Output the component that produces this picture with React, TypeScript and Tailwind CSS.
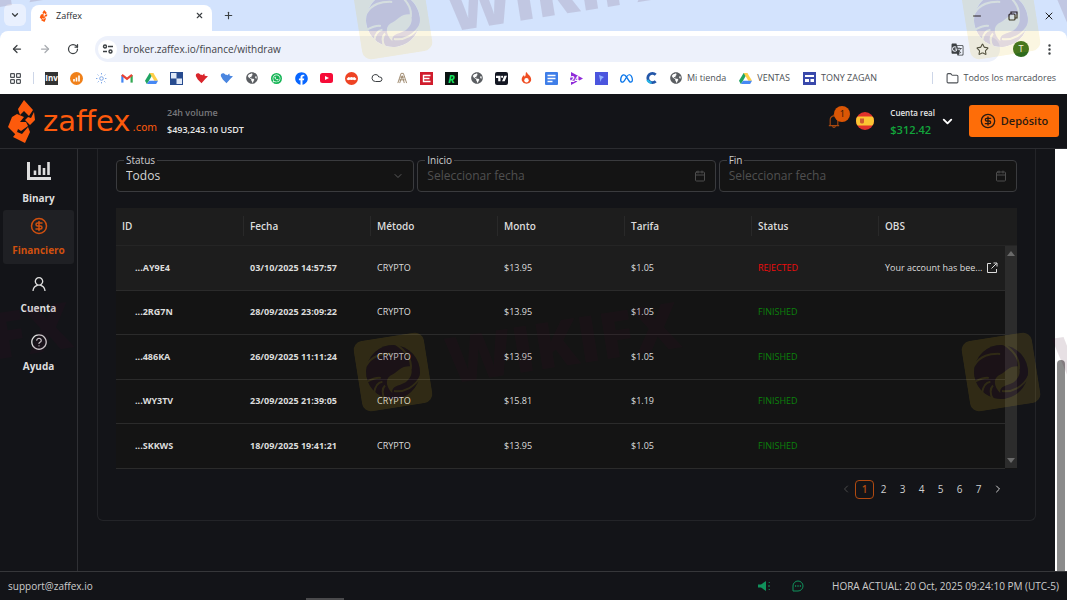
import type { ReactNode } from "react";
import {
  ArrowLeft,
  ArrowRight,
  Calendar,
  ChevronDown,
  ChevronLeft,
  ChevronRight,
  CircleDollarSign,
  Cloud,
  Folder,
  LayoutGrid,
  Minus,
  Plus,
  RotateCw,
  Star,
  X,
} from "lucide-react";
import { FaFacebook, FaGlobeAmericas, FaWhatsapp } from "react-icons/fa";
import { SiMeta, SiTradingview } from "react-icons/si";
import {
  AiOutlineBell,
  AiOutlineQuestionCircle,
  AiOutlineUser,
} from "react-icons/ai";
import { BsThreeDotsVertical } from "react-icons/bs";
import { MdGTranslate } from "react-icons/md";

function ZaffexMark({ className }: { className: string }) {
  return (
    <svg viewBox="0 0 27 43" className={className} fill="#fd5a0c" aria-hidden="true">
      <path d="M16 0 L25 10 L21 16 L16 11 L12 15 L10 9 Z" />
      <path d="M26 12 L27 20 L22 25 L17 20 L20 17 L23 18 Z" />
      <path d="M9 14 L16 17 L12 22 L18 22 L20 26 L13 31 L10 29 L8 35 L0 27 L4 17 Z" />
      <path d="M20 27 L22 32 L17 43 L5 37 L9 32 L14 34 Z" />
    </svg>
  );
}

function DriveIcon() {
  return (
    <svg viewBox="0 0 14 14" className="size-[13px]" aria-hidden="true">
      <path d="M5 1h4l-5 9-2 3-2-3.500z" fill="#1fa463" />
      <path d="M5 1h4l5 8.500h-4z" fill="#ffcf48" />
      <path d="M4.500 9.500H14L12 13H2z" fill="#4688f4" />
    </svg>
  );
}

function Tile({ className, children }: { className: string; children?: ReactNode }) {
  return (
    <span className={`flex items-center justify-center text-[8px] leading-none font-bold text-white ${className}`}>
      {children}
    </span>
  );
}

function HeartIcon({ fill }: { fill: string }) {
  return (
    <svg viewBox="0 0 14 14" className="size-[13px]" aria-hidden="true">
      <path d="M1 4.500 C0 1 4.500 0 6 3 C7 2.500 8 3.500 8 3.500 L10 1.500 L10.500 4 L14 4.500 L11.500 7 L7 12 L3 8 Z" fill={fill} />
    </svg>
  );
}

function Globe() {
  return <FaGlobeAmericas className="size-[12px] text-[#5b5e62]" />;
}

const bookmarks: { name: string; icon: ReactNode }[] = [
  { name: "Inv", icon: <Tile className="size-[13px] bg-[#333]">Inv</Tile> },
  {
    name: "Analytics",
    icon: (
      <svg viewBox="0 0 13 13" className="size-[13px]">
        <circle cx="6.500" cy="6.500" r="6.500" fill="#f08019" />
        <path d="M4 9.500V7M6.500 9.500V5.500M9 9.500V3.500" stroke="#fff" strokeWidth="1.600" />
      </svg>
    ),
  },
  {
    name: "Spark",
    icon: (
      <svg viewBox="0 0 13 13" className="size-[13px]" fill="none" stroke="#7fa8e8">
        <circle cx="6.500" cy="6.500" r="1.800" />
        <path d="M6.500 1v2M6.500 10v2M1 6.500h2M10 6.500h2M2.600 2.600l1.400 1.400M9 9l1.400 1.400M10.400 2.600L9 4M4 9l-1.400 1.400" strokeDasharray="1 .6" />
      </svg>
    ),
  },
  {
    name: "Gmail",
    icon: (
      <svg viewBox="0 0 13 10" className="h-[10px] w-[12px]" fill="none" strokeWidth="2.400">
        <path d="M1.500 10V2" stroke="#4285f4" />
        <path d="M11.500 10V2" stroke="#34a853" />
        <path d="M1 1.500l5.500 4.500L12 1.500" stroke="#ea4335" />
      </svg>
    ),
  },
  { name: "Drive", icon: <DriveIcon /> },
  {
    name: "Delicious",
    icon: (
      <svg viewBox="0 0 13 13" className="size-[13px]">
        <path d="M0 0h13v13H0z" fill="#274b8f" />
        <path d="M1 1h5.500v5.500H1zM6.500 6.500H12V12H6.500z" fill="#dfe8f7" />
      </svg>
    ),
  },
  { name: "Favoritos", icon: <HeartIcon fill="#d9252b" /> },
  { name: "Salud", icon: <HeartIcon fill="#4a86e0" /> },
  { name: "Web", icon: <Globe /> },
  { name: "WhatsApp", icon: <Tile className="size-[11px] rounded-full bg-[#16b556]"><FaWhatsapp className="size-[9px]" /></Tile> },
  { name: "Facebook", icon: <FaFacebook className="size-[13px] text-[#0866ff]" /> },
  {
    name: "YouTube",
    icon: (
      <svg viewBox="0 0 13 10" className="h-[10px] w-[13px]">
        <rect width="13" height="10" rx="2.500" fill="#f60b37" />
        <path d="M5 3l4 2-4 2z" fill="#fff" />
      </svg>
    ),
  },
  {
    name: "Incógnito",
    icon: (
      <svg viewBox="0 0 13 13" className="size-[13px]">
        <circle cx="6.500" cy="6.500" r="6.500" fill="#ee4324" />
        <path d="M1.500 7l2-2 1.500.600 1.500-.600 1.500.600 1.500-.600 2 2-1.500 1.300-2-.600-1.500.400-1.500-.400-2 .600z" fill="#fff" />
      </svg>
    ),
  },
  { name: "Nube", icon: <Cloud className="size-[12px] text-[#3c4043]" /> },
  {
    name: "Torre",
    icon: (
      <svg viewBox="0 0 13 13" className="size-[12px]" fill="none" stroke="#9a8468">
        <path d="M2 12L5.500 1.500H8L11.500 12M4 12L6.700 4 9 12M3.500 8.500h6M4.500 5.500h4.500" />
      </svg>
    ),
  },
  {
    name: "Express",
    icon: (
      <svg viewBox="0 0 13 13" className="size-[13px]">
        <path d="M0 0h13v13H0z" fill="#d01c2c" />
        <path d="M10.500 3.500h-7v6h7M3.500 6.500h6" stroke="#fff" strokeWidth="1.400" fill="none" />
      </svg>
    ),
  },
  { name: "R", icon: <Tile className="size-[13px] bg-[#0a1310]"><i className="text-[11px] text-[#18e060]">R</i></Tile> },
  { name: "Web 2", icon: <Globe /> },
  { name: "TradingView", icon: <Tile className="size-[13px] rounded-[2px] bg-[#131722]"><SiTradingview className="size-[11px]" /></Tile> },
  {
    name: "Hotmart",
    icon: (
      <svg viewBox="0 0 13 13" className="size-[13px]">
        <path d="M6 0c2 1 1 2 3 3 2 2 2.500 4 2 6a5 5 0 0 1-9 0C1 6 3 4 4 3c.500 1 0 1.500 1 1.500C6 3 5.500 1.500 6 0z" fill="#ef4e23" />
        <circle cx="6.500" cy="8.300" r="2.200" fill="#fff" />
      </svg>
    ),
  },
  {
    name: "Docs",
    icon: (
      <svg viewBox="0 0 13 13" className="size-[13px]">
        <rect width="13" height="13" rx="1" fill="#3f7ee8" />
        <path d="M2.500 3.500h8M2.500 6.500h8M2.500 9.500h5" stroke="#fff" strokeWidth="1.400" />
      </svg>
    ),
  },
  {
    name: "24",
    icon: (
      <svg viewBox="0 0 14 13" className="h-[13px] w-[14px]">
        <path d="M1 0l12 6.500L1 13V9l-1-2 1-3z" fill="#8e2bd9" />
        <text x="0" y="9.500" fontSize="8" fontWeight="700" fill="#fff" fontFamily="Open Sans, sans-serif">24</text>
      </svg>
    ),
  },
  {
    name: "Panel",
    icon: (
      <svg viewBox="0 0 13 13" className="size-[13px]">
        <path d="M0 0h13v13H0z" fill="#4b55de" />
        <path d="M4 3l5 2-2.500 2L5.500 10z" fill="#8fb0ff" />
      </svg>
    ),
  },
  { name: "Meta", icon: <SiMeta className="size-[13px] text-[#0a76ea]" /> },
  {
    name: "C",
    icon: (
      <svg viewBox="0 0 13 13" className="size-[12px]" fill="none">
        <path d="M10.500 3A5 5 0 1 0 10.500 10" stroke="#2356a8" strokeWidth="3" />
        <path d="M1.500 8.500A5 5 0 0 0 6 11.500" stroke="#27b3e6" strokeWidth="2.500" />
      </svg>
    ),
  },
];

const columns = ["ID", "Fecha", "Método", "Monto", "Tarifa", "Status", "OBS"];

const rows = [
  { id: "...AY9E4", date: "03/10/2025 14:57:57", amount: "$13.95", fee: "$1.05", status: "REJECTED", obs: "Your account has bee..." },
  { id: "...2RG7N", date: "28/09/2025 23:09:22", amount: "$13.95", fee: "$1.05", status: "FINISHED", obs: "" },
  { id: "...486KA", date: "26/09/2025 11:11:24", amount: "$13.95", fee: "$1.05", status: "FINISHED", obs: "" },
  { id: "...WY3TV", date: "23/09/2025 21:39:05", amount: "$15.81", fee: "$1.19", status: "FINISHED", obs: "" },
  { id: "...SKKWS", date: "18/09/2025 19:41:21", amount: "$13.95", fee: "$1.05", status: "FINISHED", obs: "" },
];

function BrowserChrome() {
  return (
    <div className="shrink-0 bg-[#d3e3fd] text-[#3c4043]">
      <div className="flex h-[31px] items-end pl-1">
        <button aria-label="Buscar pestañas" className="mb-[5px] flex size-[22px] items-center justify-center rounded-md bg-[#e9f0fe]">
          <ChevronDown className="size-[10px]" strokeWidth={3} />
        </button>
        <div className="ml-[5px] flex h-[26px] w-[181px] items-center rounded-t-lg bg-white pr-2 pb-[5px] pl-2">
          <ZaffexMark className="h-[12px] w-[9px]" />
          <span className="ml-2 text-[9px] text-[#2a2c30]">Zaffex</span>
          <button aria-label="Cerrar pestaña" className="ml-auto">
            <X className="size-[9px]" strokeWidth={3} />
          </button>
        </div>
        <button aria-label="Nueva pestaña" className="mb-[10px] ml-[11px]">
          <Plus className="size-[11px]" strokeWidth={2.500} />
        </button>
        <div className="mr-[12px] mb-[9px] ml-auto flex gap-6 text-[#222]">
          <button aria-label="Minimizar"><Minus className="size-[12px]" /></button>
          <button aria-label="Restaurar">
            <svg viewBox="0 0 12 12" className="size-[12px]" fill="none" stroke="currentColor" strokeWidth="1.200">
              <rect x="2" y="4" width="6" height="6" rx="1" />
              <path d="M4 4V2h6v6H8" />
            </svg>
          </button>
          <button aria-label="Cerrar"><X className="size-[12px]" strokeWidth={2} /></button>
        </div>
      </div>

      <div className="flex h-[36px] items-center rounded-t-lg bg-white pr-[11px] pl-[11px]">
        <button aria-label="Atrás"><ArrowLeft className="size-[12px]" strokeWidth={2.500} /></button>
        <button aria-label="Adelante" className="ml-4 text-[#a9acb1]"><ArrowRight className="size-[12px]" strokeWidth={2.500} /></button>
        <button aria-label="Recargar" className="ml-4"><RotateCw className="size-[12px]" strokeWidth={2.500} /></button>
        <div className="ml-4 flex h-[26px] flex-1 items-center rounded-full bg-[#edf1fb] pr-[11px] pl-[3px]">
          <button aria-label="Información del sitio" className="flex size-[19px] items-center justify-center rounded-full bg-white">
            <svg viewBox="0 0 12 12" className="size-[12px]" fill="none" stroke="currentColor" strokeWidth="1.400">
              <circle cx="3" cy="3.500" r="1.500" />
              <path d="M6 3.500h5M1 8.500h4" />
              <circle cx="8.500" cy="8.500" r="1.500" />
            </svg>
          </button>
          <input aria-label="Dirección" defaultValue="broker.zaffex.io/finance/withdraw" className="ml-[6px] min-w-0 flex-1 bg-transparent text-[10px] text-[#3f4247] outline-none" />
          <button aria-label="Traducir"><MdGTranslate className="size-[13px]" /></button>
          <button aria-label="Añadir a marcadores" className="ml-3"><Star className="size-[13px]" strokeWidth={2} /></button>
        </div>
        <button aria-label="Perfil" className="ml-[13px] flex size-4 items-center justify-center rounded-full bg-[#2f6b1d] text-[9px] text-white">T</button>
        <button aria-label="Menú" className="ml-[14px]"><BsThreeDotsVertical className="size-[13px]" /></button>
      </div>

      <nav aria-label="Marcadores" className="flex h-[27px] items-center bg-white pr-[11px] pb-[5px] text-[9px] text-[#4d5156]">
        <button aria-label="Aplicaciones" className="flex w-[31px] justify-center"><LayoutGrid className="size-[13px]" strokeWidth={2.200} /></button>
        <span className="mr-[5px] ml-[2px] h-3 w-px bg-[#cdd6e8]" />
        {bookmarks.map((b) => (
          <a key={b.name} href="#" aria-label={b.name} className="flex w-[25px] shrink-0 justify-center">{b.icon}</a>
        ))}
        <a href="#" className="ml-[6px] flex items-center gap-[5px] whitespace-nowrap"><Globe />Mi tienda</a>
        <a href="#" className="ml-[13px] flex items-center gap-[5px]"><DriveIcon />VENTAS</a>
        <a href="#" className="ml-[13px] flex items-center gap-[5px] whitespace-nowrap">
          <svg viewBox="0 0 13 13" className="size-[13px]" aria-hidden="true">
            <path d="M0 0h13v13H0z" fill="#3949ab" />
            <path d="M2 3h9v2H2zM2 7h4v3H2zM7.500 7H11v3H7.500z" fill="#fff" />
          </svg>
          TONY ZAGAN
        </a>
        <a href="#" className="ml-auto flex items-center gap-[5px] whitespace-nowrap">
          <span className="mr-2 h-3 w-px bg-[#cdd6e8]" />
          <Folder className="size-[13px]" />
          Todos los marcadores
        </a>
      </nav>
    </div>
  );
}

function AppHeader() {
  return (
    <header className="flex h-[55px] shrink-0 items-center border-b border-[#2b2c30] pr-2 pl-2">
      <a href="#" className="flex items-center text-[#fd5a0c]">
        <ZaffexMark className="h-[43px] w-[27px]" />
        <span className="ml-2 flex items-baseline gap-[2px] font-['DejaVu_Sans',sans-serif] leading-none">
          <span className="text-[29px]">zaffex</span>
          <span className="text-[10px]">.com</span>
        </span>
      </a>
      <div className="ml-[10px] text-[9px] leading-[17px] font-semibold">
        <div className="text-[#77787b]">24h volume</div>
        <div className="text-[#e6e6e6]">$493,243.10 USDT</div>
      </div>
      <button aria-label="Notificaciones" className="relative ml-auto text-[#a8480f]">
        <AiOutlineBell className="size-4" />
        <span className="absolute -top-[7px] -right-[8px] flex size-4 items-center justify-center rounded-full bg-[#db5605] text-[9px] text-[#2a1408]">1</span>
      </button>
      <button aria-label="Idioma" className="ml-[14px]">
        <svg viewBox="0 0 18 18" className="size-[18px] rounded-full">
          <path d="M0 0h18v18H0z" fill="#e0322c" />
          <path d="M0 4.500h18v9H0z" fill="#fbc533" />
          <path d="M4 6.500h4v3.500c0 2-4 2-4 0z" fill="#cf5a30" />
        </svg>
      </button>
      <div className="ml-4 leading-[17px]">
        <div className="text-[8px] leading-[17px] font-semibold text-[#e6e6e6]">Cuenta real</div>
        <div className="text-[11px] leading-[17px] font-semibold text-[#12a43b]">$312.42</div>
      </div>
      <button aria-label="Cambiar cuenta" className="ml-[5px] text-white"><ChevronDown className="size-[15px]" strokeWidth={3} /></button>
      <button className="ml-[14px] flex h-8 w-[90px] items-center justify-center gap-[5px] rounded-[3px] bg-[#fe6d08] text-[11px] font-semibold text-[#2a1a10]">
        <CircleDollarSign className="size-4" />
        Depósito
      </button>
    </header>
  );
}

function Sidebar() {
  return (
    <nav className="flex w-[78px] shrink-0 flex-col gap-1 border-r border-[#2f3034] px-[3px] pt-[9px] text-[10px] leading-4 font-bold text-[#dedede]">
      <a href="#" className="flex h-[48px] flex-col items-center justify-between">
        <svg viewBox="0 0 24 20" className="mt-[3px] h-5 w-6" fill="none" stroke="currentColor" aria-hidden="true">
          <path d="M1.500 1v16.500H24" strokeWidth="3" />
          <path d="M8 14V9.500M12.500 14V4M17 14V7M21.500 14V1" strokeWidth="2.600" />
        </svg>
        Binary
      </a>
      <a href="#" aria-current="page" className="flex h-[54px] flex-col items-center justify-between rounded-[3px] bg-[#1f2024] pt-[7px] pb-[6px] text-[#d0500f]">
        <CircleDollarSign className="size-[18px]" />
        Financiero
      </a>
      <a href="#" className="flex h-[54px] flex-col items-center justify-between pt-[7px] pb-[6px]">
        <AiOutlineUser className="size-[18px]" />
        Cuenta
      </a>
      <a href="#" className="flex h-[54px] flex-col items-center justify-between pt-[7px] pb-[6px]">
        <AiOutlineQuestionCircle className="size-[18px]" />
        Ayuda
      </a>
    </nav>
  );
}

function Field({ id, label, children }: { id: string; label: string; children: ReactNode }) {
  return (
    <div className="relative flex h-8 flex-1 items-center rounded-[4px] border border-[#3a3b3e] bg-[#141414] px-[9px] text-[12px] text-[#d6d6d6]">
      <label htmlFor={id} className="absolute -top-2 left-[7px] bg-[#141417] px-[2px] text-[10px] leading-[14px] text-[#cfcfcf]">
        {label}
      </label>
      {children}
    </div>
  );
}

function DateField({ id, label }: { id: string; label: string }) {
  return (
    <Field id={id} label={label}>
      <input id={id} placeholder="Seleccionar fecha" className="min-w-0 flex-1 bg-transparent outline-none placeholder:text-[#505050]" />
      <Calendar className="size-[12px] text-[#4d4d4d]" />
    </Field>
  );
}

function WithdrawTable() {
  return (
    <table className="mt-4 w-full table-fixed border-collapse bg-[#141414] text-left text-[9px] text-[#dcdcdc]">
      <colgroup>
        {columns.map((c) => (
          <col key={c} />
        ))}
        <col className="w-3" />
      </colgroup>
      <thead>
        <tr className="h-[37px] bg-[#1d1d1d] text-[10px]">
          {columns.map((c, i) => (
            <th key={c} scope="col" colSpan={c === "OBS" ? 2 : 1} className="border-b border-[#252525] p-0 font-semibold">
              <div className={`flex h-5 items-center pl-[6px] ${i === 0 ? "" : "border-l border-[#292929]"}`}>{c}</div>
            </th>
          ))}
        </tr>
      </thead>
      <tbody>
        {rows.map((r, i) => (
          <tr key={r.id} className="h-[44px] odd:h-[45px]">
            {[
              <span key="id" className="pl-3 font-bold">{r.id}</span>,
              <span key="date" className="font-bold">{r.date}</span>,
              "CRYPTO",
              r.amount,
              r.fee,
              <span key="status" className={r.status === "REJECTED" ? "text-[#f00c0c]" : "text-[#0b800b]"}>{r.status}</span>,
              r.obs && (
                <span key="obs" className="flex items-center gap-1">
                  {r.obs}
                  <button aria-label="Ver observación">
                    <svg viewBox="0 0 12 12" className="size-[12px]" fill="none" stroke="currentColor">
                      <path d="M5 1.500H1.500v9h9V7M5.500 6.500l5-5M7.500 1H11v3.500" />
                    </svg>
                  </button>
                </span>
              ),
            ].map((cell, c) => (
              <td key={columns[c]} className={`border-b border-[#2b2b2b] py-0 pr-0 pl-[7px] whitespace-nowrap ${i === 0 ? "bg-[#1d1d1d]" : ""}`}>
                {cell}
              </td>
            ))}
            {i === 0 && (
              <td rowSpan={rows.length} aria-hidden="true" className="relative bg-[#2c2c2c] p-0">
                <div className="absolute inset-0 flex flex-col items-center justify-between py-[5px]">
                  <svg viewBox="0 0 8 5" className="h-[5px] w-2" fill="#6a6a6a"><path d="M4 0l4 5H0z" /></svg>
                  <svg viewBox="0 0 8 5" className="h-[5px] w-2" fill="#6a6a6a"><path d="M4 5L0 0h8z" /></svg>
                </div>
              </td>
            )}
          </tr>
        ))}
      </tbody>
    </table>
  );
}

function Pagination() {
  return (
    <nav aria-label="Paginación" className="mt-[11px] flex justify-end pr-[10px] text-[10px] text-[#d0d0d0]">
      <button aria-label="Anterior" disabled className="flex size-[19px] items-center justify-center text-[#4a4a4a]"><ChevronLeft className="size-[12px]" /></button>
      {[1, 2, 3, 4, 5, 6, 7].map((n) => (
        <button key={n} className={`flex size-[19px] items-center justify-center ${n === 1 ? "rounded-[4px] border border-[#b04a10] font-semibold text-[#b04a10]" : ""}`}>
          {n}
        </button>
      ))}
      <button aria-label="Siguiente" className="flex size-[19px] items-center justify-center"><ChevronRight className="size-[12px]" /></button>
    </nav>
  );
}

function Footer() {
  return (
    <footer className="relative flex h-[29px] shrink-0 items-center border-t border-[#36373a] px-2 text-[10px] text-[#cdcdcd]">
      <a href="mailto:support@zaffex.io">support@zaffex.io</a>
      <button aria-label="Anuncios" className="ml-auto">
        <svg viewBox="0 0 12 12" className="size-[12px]" fill="#11925c">
          <path d="M0 4.500h3L8 1v10L3 7.500H0zM10 3l2-1v1zM10 5.500h2v1h-2zM10 9l2 1V9z" />
        </svg>
      </button>
      <button aria-label="Chat" className="ml-[22px]">
        <svg viewBox="0 0 12 12" className="size-[12px]" fill="none" stroke="#11925c">
          <path d="M1 11V6a5 5 0 1 1 5 5z" />
          <path d="M3 6h1.200M5.400 6h1.200M7.800 6H9" strokeWidth="1.300" />
        </svg>
      </button>
      <span className="ml-7 whitespace-nowrap">HORA ACTUAL: 20 Oct, 2025 09:24:10 PM (UTC-5)</span>
      <span className="absolute bottom-0 left-[306px] h-[2px] w-[38px] bg-[#4a4a4c]" />
    </footer>
  );
}

function EagleCuts({ color }: { color: string }) {
  return (
    <g fill="none" stroke={color} strokeWidth="2">
      <path d="M18 -3 C9 -5 5 0 0 2 C-9 4 -10 12 -4 21 C-4 13 3 15 11 12 C18 8 20 2 18 -3Z" fill={color} stroke="none" />
      <path d="M6 -28 C15 -20 21 -10 18 0" />
      <path d="M-26 -10 C-18 -20 -8 -20 2 -18" />
      <path d="M-29 6 C-22 4 -18 2 -13 4" />
      <path d="M-22 18 C-20 11 -16 8 -12 8" />
      <path d="M-12 26 C-15 20 -13 14 -10 12" />
      <path d="M27 8 C20 18 8 22 -2 19" />
    </g>
  );
}

function WatermarkTile({ x, y }: { x: number; y: number }) {
  return (
    <g transform={`translate(${x} ${y}) rotate(-9)`}>
      <rect x="-35.500" y="-35.500" width="71" height="71" rx="9" fill="#e8c020" opacity="0.13" mask="url(#tile-mask)" />
      <circle r="27" fill="#430a28" opacity="0.15" mask="url(#eagle-mask)" />
    </g>
  );
}

function Watermarks() {
  return (
    <svg aria-hidden="true" className="pointer-events-none absolute inset-0 h-full w-full">
      <defs>
        <mask id="tile-mask" maskUnits="userSpaceOnUse" x="-36" y="-36" width="72" height="72">
          <rect x="-36" y="-36" width="72" height="72" fill="#fff" />
          <circle r="27" fill="#000" />
          <EagleCuts color="#fff" />
        </mask>
        <mask id="eagle-mask" maskUnits="userSpaceOnUse" x="-36" y="-36" width="72" height="72">
          <circle r="27" fill="#fff" />
          <EagleCuts color="#000" />
        </mask>
      </defs>
      {[20, 372].map((y) => (
        <g key={y}>
          <WatermarkTile x={393} y={y} />
          <WatermarkTile x={1001} y={y} />
          {[-158, 450, 1058].map((x) => (
            <text
              key={x}
              transform={`translate(${x} ${y + 12}) rotate(-9)`}
              fontFamily="Open Sans, sans-serif"
              fontSize="64"
              fontWeight="800"
              fill="#430a28"
              opacity="0.12"
            >
              WIKIFX
            </text>
          ))}
        </g>
      ))}
    </svg>
  );
}

export default function App() {
  return (
    <div className="relative flex h-screen flex-col overflow-hidden bg-[#131418] font-['Open_Sans','Noto_Sans',sans-serif]">
      <BrowserChrome />
      <AppHeader />
      <div className="flex min-h-0 flex-1">
        <Sidebar />
        <main className="min-w-0 flex-1 overflow-hidden px-[19px]">
          <section className="rounded-b-md border-x border-b border-[#232428] px-[18px] pt-[11px] pb-[21px]">
            <div className="flex gap-[3px]">
              <Field id="status" label="Status">
                <select id="status" className="min-w-0 flex-1 appearance-none bg-transparent outline-none">
                  <option>Todos</option>
                </select>
                <ChevronDown className="size-[12px] text-[#5a5a5a]" />
              </Field>
              <DateField id="inicio" label="Inicio" />
              <DateField id="fin" label="Fin" />
            </div>
            <WithdrawTable />
            <Pagination />
          </section>
        </main>
        <div className="flex w-3 shrink-0 flex-col justify-end bg-white px-[2px]">
          <div className="h-1/2 rounded-t-full bg-[#8b8b8b]" />
        </div>
      </div>
      <Footer />
      <Watermarks />
    </div>
  );
}
